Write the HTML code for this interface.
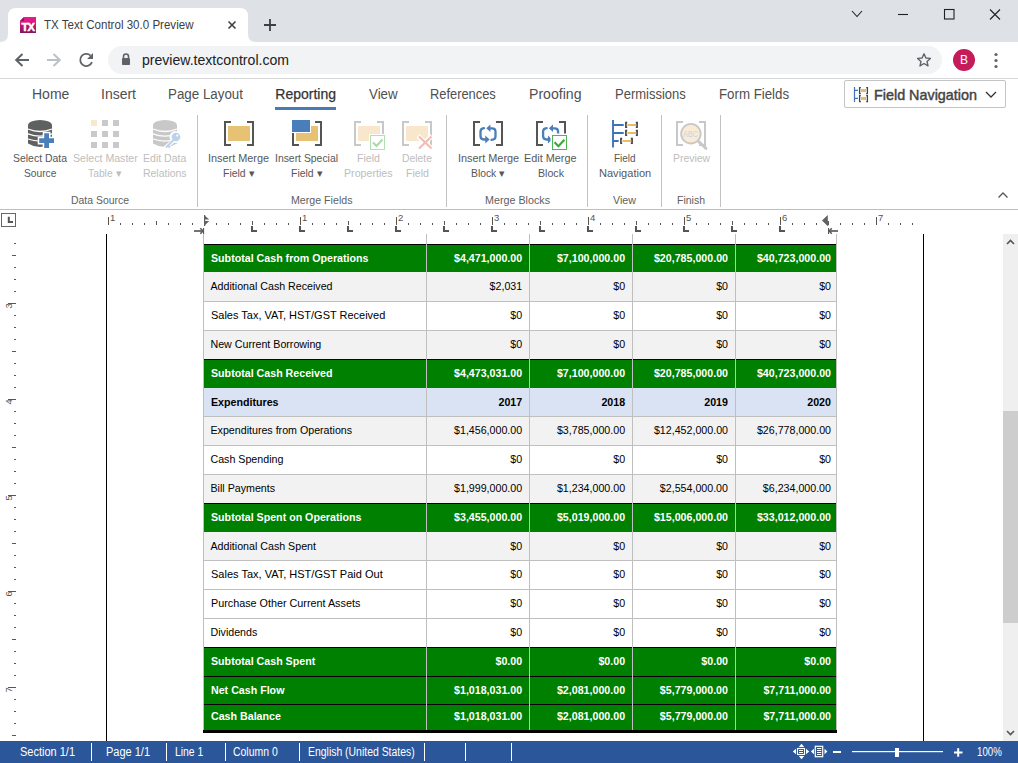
<!DOCTYPE html>
<html><head><meta charset="utf-8">
<style>
*{box-sizing:border-box;margin:0;padding:0}
html,body{width:1018px;height:763px;overflow:hidden;background:#fff;font-family:"Liberation Sans",sans-serif;position:relative}
.a{position:absolute}
.t{position:absolute;white-space:pre;line-height:0;transform-origin:0 0;font-family:"Liberation Sans",sans-serif}
svg{position:absolute;overflow:visible}
</style></head><body>
<div class="a" style="left:0px;top:0px;width:1018px;height:42px;background:#dee1e6;"></div>
<svg style="left:0;top:0" width="260" height="42" viewBox="0 0 260 42"><path d="M0,42 Q8,42 8,34 L8,16 Q8,8 16,8 L240,8 Q248,8 248,16 L248,34 Q248,42 256,42 Z" fill="#fff"/></svg>
<svg style="left:20px;top:17px" width="16" height="16" viewBox="0 0 16 16"><defs><linearGradient id="fg" x1="0" y1="0" x2="0" y2="1"><stop offset="0" stop-color="#ee1a8e"/><stop offset="0.3" stop-color="#e0167f"/><stop offset="1" stop-color="#7e1656"/></linearGradient></defs><path d="M4,0 H16 V16 H0 V4 Z" fill="url(#fg)"/><path d="M0,4 L4,0 L4,4 Z" fill="#8a1a5e"/><text x="7.8" y="13.8" text-anchor="middle" font-family="Liberation Sans" font-weight="bold" font-size="10.5" fill="#fff" letter-spacing="-0.9" stroke="#fff" stroke-width="0.5" textLength="12.4" lengthAdjust="spacingAndGlyphs">TX</text></svg>
<svg style="left:224px;top:17px" width="16" height="16" viewBox="0 0 16 16"><path d="M4.5,4.5 L11.5,11.5 M11.5,4.5 L4.5,11.5" stroke="#3c4043" stroke-width="1.6"/></svg>
<svg style="left:262px;top:17px" width="16" height="16" viewBox="0 0 16 16"><path d="M8,2 V14 M2,8 H14" stroke="#3c4043" stroke-width="1.8"/></svg>
<svg style="left:840px;top:0" width="178" height="30" viewBox="0 0 178 30"><g fill="none" stroke="#202124" stroke-width="1.1"><path d="M12,11 L17,16.5 L22,11"/><path d="M58,14.5 H68"/><rect x="104.5" y="9.5" width="9.5" height="9.5"/><path d="M150,9.5 L160,19.5 M160,9.5 L150,19.5"/></g></svg>
<div class="a" style="left:0px;top:42px;width:1018px;height:36px;background:#fff;"></div>
<div class="a" style="left:108px;top:46px;width:834px;height:28px;background:#f1f3f4;border-radius:14px;"></div>
<div class="a" style="left:0px;top:78px;width:1018px;height:1px;background:#d6d8da;"></div>
<svg style="left:14px;top:52px" width="16" height="16" viewBox="0 0 16 16"><path d="M15,8 H2.5 M8.5,2 L2.2,8 L8.5,14" fill="none" stroke="#5f6368" stroke-width="2"/></svg>
<svg style="left:46px;top:52px" width="16" height="16" viewBox="0 0 16 16"><path d="M1,8 H13.5 M7.5,2 L13.8,8 L7.5,14" fill="none" stroke="#bdc1c6" stroke-width="2"/></svg>
<svg style="left:78px;top:52px" width="16" height="16" viewBox="0 0 16 16"><path d="M14,10.2 A6.1,6.1 0 1 1 12.6,3.6" fill="none" stroke="#5f6368" stroke-width="1.8"/><path d="M15,1 V6.9 H9.1 Z" fill="#5f6368"/></svg>
<svg style="left:120px;top:52px" width="12" height="14" viewBox="0 0 12 14"><path d="M3.5,6 V4.5 A2.5,2.5 0 0 1 8.5,4.5 V6" fill="none" stroke="#5f6368" stroke-width="1.6"/><rect x="2" y="6" width="8" height="7" rx="0.8" fill="#5f6368"/></svg>
<svg style="left:916px;top:52px" width="16" height="16" viewBox="0 0 16 16"><path d="M8,1.8 L9.9,6 L14.4,6.4 L11,9.4 L12,13.9 L8,11.5 L4,13.9 L5,9.4 L1.6,6.4 L6.1,6 Z" fill="none" stroke="#5f6368" stroke-width="1.4" stroke-linejoin="round"/></svg>
<div class="a" style="left:953px;top:49px;width:22px;height:22px;background:#c51b5b;border-radius:50%;"></div>
<svg style="left:992px;top:50px" width="8" height="20" viewBox="0 0 8 20"><circle cx="4" cy="4.5" r="1.6" fill="#5f6368"/><circle cx="4" cy="10.5" r="1.6" fill="#5f6368"/><circle cx="4" cy="16.5" r="1.6" fill="#5f6368"/></svg>
<div class="a" style="left:275px;top:107px;width:61px;height:3px;background:#4a7ab5;"></div>
<div class="a" style="left:844px;top:80px;width:162px;height:28px;background:#fff;border:1px solid #c4c4c4;border-radius:2px;"></div>
<svg style="left:850px;top:84px" width="24" height="20" viewBox="0 0 24 20"><path d="M4.5,3 V18 M4.5,6.4 H8 M4.5,14.4 H8" fill="none" stroke="#3f73b3" stroke-width="1.2"/><path d="M10.8,3.6 H9.6 V9.6 H10.8 M16.2,3.6 H17.4 V9.6 H16.2 M10.8,11.6 H9.6 V17.6 H10.8 M16.2,11.6 H17.4 V17.6 H16.2" fill="none" stroke="#444" stroke-width="1.3"/><rect x="11" y="5" width="5" height="3" fill="#e8bd62"/><rect x="11" y="13" width="5" height="3" fill="#e8bd62"/></svg>
<svg style="left:984px;top:89px" width="14" height="10" viewBox="0 0 14 10"><path d="M2,3 L7,8 L12,3" fill="none" stroke="#333" stroke-width="1.3"/></svg>
<div class="a" style="left:0px;top:209px;width:1018px;height:1px;background:#bebebe;"></div>
<div class="a" style="left:197px;top:115px;width:1px;height:92px;background:#c2c2c2;"></div>
<div class="a" style="left:446px;top:115px;width:1px;height:92px;background:#c2c2c2;"></div>
<div class="a" style="left:587px;top:115px;width:1px;height:92px;background:#c2c2c2;"></div>
<div class="a" style="left:661px;top:115px;width:1px;height:92px;background:#c2c2c2;"></div>
<div class="a" style="left:720px;top:115px;width:1px;height:92px;background:#c2c2c2;"></div>
<svg style="left:996px;top:190px" width="14" height="10" viewBox="0 0 14 10"><path d="M2.5,7.5 L7,3 L11.5,7.5" fill="none" stroke="#555" stroke-width="1.3"/></svg>
<svg style="left:26px;top:118px" width="30" height="32" viewBox="0 0 30 32">
<path d="M2,7.5 A12,5.5 0 0 1 26,7.5 V25.4 Q14,32.6 2,25.4 Z" fill="#5f6060"/>
<path d="M2,11 Q14,16 26,11 M2,15.9 Q14,20.5 26,15.9 M2,21 Q14,25.2 26,21" fill="none" stroke="#fff" stroke-width="1.3"/>
<path d="M16.7,13.7 H24.5 V18.7 H29.5 V26.5 H24.5 V31.5 H16.7 V26.5 H11.7 V18.7 H16.7 Z" fill="#fff"/>
<path d="M18.2,15.2 H23 V20.2 H28 V25 H23 V30 H18.2 V25 H13.2 V20.2 H18.2 Z" fill="#4a7fba"/>
</svg>
<div class="a" style="left:91px;top:120px;width:6px;height:6px;background:#f8e8cc;"></div>
<div class="a" style="left:102px;top:120px;width:6px;height:6px;background:#c9c9c9;"></div>
<div class="a" style="left:113px;top:120px;width:6px;height:6px;background:#c9c9c9;"></div>
<div class="a" style="left:91px;top:131px;width:6px;height:6px;background:#c9c9c9;"></div>
<div class="a" style="left:102px;top:131px;width:6px;height:6px;background:#c9c9c9;"></div>
<div class="a" style="left:113px;top:131px;width:6px;height:6px;background:#c9c9c9;"></div>
<div class="a" style="left:91px;top:142px;width:6px;height:6px;background:#c9c9c9;"></div>
<div class="a" style="left:102px;top:142px;width:6px;height:6px;background:#c9c9c9;"></div>
<div class="a" style="left:113px;top:142px;width:6px;height:6px;background:#c9c9c9;"></div>
<svg style="left:151px;top:118px" width="30" height="32" viewBox="0 0 30 32">
<path d="M2,7.5 A12,5.5 0 0 1 26,7.5 V25.4 Q14,32.6 2,25.4 Z" fill="#c8c8c8"/>
<path d="M2,11 Q14,16 26,11 M2,15.9 Q14,20.5 26,15.9 M2,21 Q14,25.2 26,21" fill="none" stroke="#fff" stroke-width="1.3"/>
<circle cx="24.5" cy="19" r="6" fill="#fff"/>
<path d="M22,23 L13,31" stroke="#fff" stroke-width="4"/>
<circle cx="25" cy="19" r="4.3" fill="#bcd2ea"/>
<circle cx="26.3" cy="17.6" r="1.1" fill="#fff"/>
<path d="M22.5,22 L15,29.5 M17,27.5 L19,29.5" stroke="#bcd2ea" stroke-width="2"/>
</svg>
<svg style="left:0;top:0" width="1018" height="210" viewBox="0 0 1018 210"><path d="M231,122 H225 V145 H231 M247,122 H253 V145 H247" fill="none" stroke="#555" stroke-width="2"/><rect x="228" y="126" width="22" height="15" fill="#e8c274"/><path d="M299,122 H293 V145 H299 M315,122 H321 V145 H315" fill="none" stroke="#555" stroke-width="2"/><rect x="296" y="126" width="22" height="15" fill="#e8c274"/><rect x="291" y="119" width="20" height="14" fill="#fff"/><rect x="292" y="120" width="18" height="12" fill="#4a7ebb"/><path d="M361,122 H355 V145 H361 M377,122 H383 V145 H377" fill="none" stroke="#c8c8c8" stroke-width="2"/><rect x="358" y="126" width="22" height="15" fill="#f8e7ca"/><rect x="369" y="134" width="17" height="17" fill="#fff"/><rect x="370.5" y="135.5" width="14" height="14" fill="#fff" stroke="#b2e0b2" stroke-width="1"/><path d="M373,142.5 L376.5,146 L382.5,139.5" fill="none" stroke="#a6dba6" stroke-width="2"/><path d="M409,122 H403 V145 H409 M425,122 H431 V145 H425" fill="none" stroke="#c8c8c8" stroke-width="2"/><rect x="406" y="126" width="22" height="15" fill="#f8e7ca"/><path d="M418,136 L432,149 M432,136 L418,149" stroke="#fff" stroke-width="4.5"/><path d="M419,136.5 L431.5,148.5 M431.5,136.5 L419,148.5" stroke="#f1bcb4" stroke-width="2.2"/><path d="M480,122 H474 V145 H480 M496,122 H502 V145 H496" fill="none" stroke="#555" stroke-width="2"/><g transform="translate(0,0)"><path d="M484,128.2 Q480.5,128.5 480.5,131.5 V136 Q480.5,139.5 484,139.5 H486.5 M491.5,139.8 Q495.5,139.5 495.5,136.5 V131.5 Q495.5,128.3 492,128.3 H489.5" fill="none" stroke="#4a7fba" stroke-width="2.3" stroke-linecap="round"/><path d="M485.3,135.6 L489.6,139.5 L485.3,143.4 Z M490.4,124.5 L486.3,128.3 L490.4,132.1 Z" fill="#4a7fba"/></g><path d="M543,122 H537 V145 H543 M559,122 H565 V145 H559" fill="none" stroke="#555" stroke-width="2"/><g transform="translate(62.6,0)"><path d="M484,128.2 Q480.5,128.5 480.5,131.5 V136 Q480.5,139.5 484,139.5 H486.5 M491.5,139.8 Q495.5,139.5 495.5,136.5 V131.5 Q495.5,128.3 492,128.3 H489.5" fill="none" stroke="#4a7fba" stroke-width="2.3" stroke-linecap="round"/><path d="M485.3,135.6 L489.6,139.5 L485.3,143.4 Z M490.4,124.5 L486.3,128.3 L490.4,132.1 Z" fill="#4a7fba"/></g><rect x="550.5" y="133.5" width="18" height="18" fill="#fff"/><rect x="552.5" y="135.5" width="14" height="14" fill="#fff" stroke="#52b552" stroke-width="1"/><path d="M554.6,142.3 L558.4,146.2 L564.4,139.8" fill="none" stroke="#3aa83a" stroke-width="2.1"/><path d="M613,120 V147.6 M613,125 H623.7 M613,133 H623.7 M613,141 H618.7" fill="none" stroke="#3f73b3" stroke-width="1.9"/><g fill="none" stroke="#444" stroke-width="1.6"><path d="M627.2,122.6 H625.9 V127.2 H627.2 M635.8,122.6 H637.1 V127.2 H635.8 M627.2,130.6 H625.9 V135.2 H627.2 M635.8,130.6 H637.1 V135.2 H635.8 M622.2,138.6 H620.9 V143.2 H622.2 M630.8,138.6 H632.1 V143.2 H630.8"/></g><path d="M627.5,125 H636 M627.5,133 H636 M622.5,141 H631" stroke="#e8bd62" stroke-width="1.8"/><path d="M683,122 H677 V145 H683 M699,122 H705 V145 H699" fill="none" stroke="#c8c8c8" stroke-width="2"/><path d="M697.5,140.5 L706,148.3" stroke="#c8c8c8" stroke-width="3" stroke-linecap="round"/><circle cx="690.9" cy="133.7" r="9.8" fill="#faebd2" stroke="#c8c8c8" stroke-width="1.8"/><text x="683" y="137.2" textLength="15" lengthAdjust="spacingAndGlyphs" font-family="Liberation Sans" font-size="9.5" fill="#c3d5ea">ABC</text></svg>
<svg style="left:0;top:0" width="1018" height="763" viewBox="0 0 1018 763"><rect x="1.5" y="213.5" width="14" height="13" fill="none" stroke="#666" stroke-width="1"/><path d="M8.8,216.8 V222 H13" fill="none" stroke="#555" stroke-width="2"/><rect x="108" y="217" width="1" height="8" fill="#555"/><rect x="120" y="223" width="1" height="2" fill="#555"/><rect x="132" y="223" width="1" height="2" fill="#555"/><rect x="144" y="223" width="1" height="2" fill="#555"/><rect x="156" y="221" width="1" height="4" fill="#555"/><rect x="168" y="223" width="1" height="2" fill="#555"/><rect x="180" y="223" width="1" height="2" fill="#555"/><rect x="192" y="223" width="1" height="2" fill="#555"/><rect x="216" y="223" width="1" height="2" fill="#555"/><rect x="228" y="223" width="1" height="2" fill="#555"/><rect x="240" y="223" width="1" height="2" fill="#555"/><rect x="252" y="221" width="1" height="4" fill="#555"/><rect x="264" y="223" width="1" height="2" fill="#555"/><rect x="276" y="223" width="1" height="2" fill="#555"/><rect x="288" y="223" width="1" height="2" fill="#555"/><rect x="300" y="217" width="1" height="8" fill="#555"/><rect x="312" y="223" width="1" height="2" fill="#555"/><rect x="324" y="223" width="1" height="2" fill="#555"/><rect x="336" y="223" width="1" height="2" fill="#555"/><rect x="348" y="221" width="1" height="4" fill="#555"/><rect x="360" y="223" width="1" height="2" fill="#555"/><rect x="372" y="223" width="1" height="2" fill="#555"/><rect x="384" y="223" width="1" height="2" fill="#555"/><rect x="396" y="217" width="1" height="8" fill="#555"/><rect x="408" y="223" width="1" height="2" fill="#555"/><rect x="420" y="223" width="1" height="2" fill="#555"/><rect x="432" y="223" width="1" height="2" fill="#555"/><rect x="444" y="221" width="1" height="4" fill="#555"/><rect x="456" y="223" width="1" height="2" fill="#555"/><rect x="468" y="223" width="1" height="2" fill="#555"/><rect x="480" y="223" width="1" height="2" fill="#555"/><rect x="492" y="217" width="1" height="8" fill="#555"/><rect x="504" y="223" width="1" height="2" fill="#555"/><rect x="516" y="223" width="1" height="2" fill="#555"/><rect x="528" y="223" width="1" height="2" fill="#555"/><rect x="540" y="221" width="1" height="4" fill="#555"/><rect x="552" y="223" width="1" height="2" fill="#555"/><rect x="564" y="223" width="1" height="2" fill="#555"/><rect x="576" y="223" width="1" height="2" fill="#555"/><rect x="588" y="217" width="1" height="8" fill="#555"/><rect x="600" y="223" width="1" height="2" fill="#555"/><rect x="612" y="223" width="1" height="2" fill="#555"/><rect x="624" y="223" width="1" height="2" fill="#555"/><rect x="636" y="221" width="1" height="4" fill="#555"/><rect x="648" y="223" width="1" height="2" fill="#555"/><rect x="660" y="223" width="1" height="2" fill="#555"/><rect x="672" y="223" width="1" height="2" fill="#555"/><rect x="684" y="217" width="1" height="8" fill="#555"/><rect x="696" y="223" width="1" height="2" fill="#555"/><rect x="708" y="223" width="1" height="2" fill="#555"/><rect x="720" y="223" width="1" height="2" fill="#555"/><rect x="732" y="221" width="1" height="4" fill="#555"/><rect x="744" y="223" width="1" height="2" fill="#555"/><rect x="756" y="223" width="1" height="2" fill="#555"/><rect x="768" y="223" width="1" height="2" fill="#555"/><rect x="780" y="217" width="1" height="8" fill="#555"/><rect x="792" y="223" width="1" height="2" fill="#555"/><rect x="804" y="223" width="1" height="2" fill="#555"/><rect x="816" y="223" width="1" height="2" fill="#555"/><rect x="828" y="221" width="1" height="4" fill="#555"/><rect x="840" y="223" width="1" height="2" fill="#555"/><rect x="852" y="223" width="1" height="2" fill="#555"/><rect x="864" y="223" width="1" height="2" fill="#555"/><rect x="876" y="217" width="1" height="8" fill="#555"/><rect x="888" y="223" width="1" height="2" fill="#555"/><rect x="900" y="223" width="1" height="2" fill="#555"/><rect x="912" y="223" width="1" height="2" fill="#555"/></svg>
<svg style="left:0;top:0" width="1018" height="763" viewBox="0 0 1018 763"><path d="M252,226 V231 H257" fill="none" stroke="#555" stroke-width="2"/><path d="M300,226 V231 H305" fill="none" stroke="#555" stroke-width="2"/><path d="M348,226 V231 H353" fill="none" stroke="#555" stroke-width="2"/><path d="M396,226 V231 H401" fill="none" stroke="#555" stroke-width="2"/><path d="M444,226 V231 H449" fill="none" stroke="#555" stroke-width="2"/><path d="M492,226 V231 H497" fill="none" stroke="#555" stroke-width="2"/><path d="M540,226 V231 H545" fill="none" stroke="#555" stroke-width="2"/><path d="M588,226 V231 H593" fill="none" stroke="#555" stroke-width="2"/><path d="M636,226 V231 H641" fill="none" stroke="#555" stroke-width="2"/><path d="M684,226 V231 H689" fill="none" stroke="#555" stroke-width="2"/><path d="M732,226 V231 H737" fill="none" stroke="#555" stroke-width="2"/><path d="M780,226 V231 H785" fill="none" stroke="#555" stroke-width="2"/><path d="M204,215 L209.3,219.6 L204,219.6 Z M204,221.1 L209.3,221.1 L204,226 Z" fill="#616161"/><rect x="204" y="215" width="1.2" height="11" fill="#616161"/><path d="M194,231 H202" stroke="#5a5a5a" stroke-width="1.7"/><path d="M200.3,228.2 L203,231 L200.3,233.8" fill="none" stroke="#5a5a5a" stroke-width="1.5"/><rect x="203" y="228" width="1.1" height="6" fill="#5a5a5a"/><path d="M822,220.4 L827.8,214.9 V221.2 H829 V224.8 L827.6,226 Z" fill="#616161"/><rect x="828" y="228" width="1.1" height="6" fill="#5a5a5a"/><path d="M830,231 H838" stroke="#5a5a5a" stroke-width="1.7"/><path d="M831.8,228.2 L829.1,231 L831.8,233.8" fill="none" stroke="#5a5a5a" stroke-width="1.5"/></svg>
<svg style="left:0;top:0" width="1018" height="763" viewBox="0 0 1018 763"><rect x="14" y="243" width="2" height="1" fill="#555"/><rect x="12" y="255" width="4" height="1" fill="#555"/><rect x="14" y="267" width="2" height="1" fill="#555"/><rect x="14" y="279" width="2" height="1" fill="#555"/><rect x="14" y="291" width="2" height="1" fill="#555"/><rect x="8" y="303" width="8" height="1" fill="#555"/><rect x="14" y="315" width="2" height="1" fill="#555"/><rect x="14" y="327" width="2" height="1" fill="#555"/><rect x="14" y="339" width="2" height="1" fill="#555"/><rect x="12" y="351" width="4" height="1" fill="#555"/><rect x="14" y="363" width="2" height="1" fill="#555"/><rect x="14" y="375" width="2" height="1" fill="#555"/><rect x="14" y="387" width="2" height="1" fill="#555"/><rect x="8" y="399" width="8" height="1" fill="#555"/><rect x="14" y="411" width="2" height="1" fill="#555"/><rect x="14" y="423" width="2" height="1" fill="#555"/><rect x="14" y="435" width="2" height="1" fill="#555"/><rect x="12" y="447" width="4" height="1" fill="#555"/><rect x="14" y="459" width="2" height="1" fill="#555"/><rect x="14" y="471" width="2" height="1" fill="#555"/><rect x="14" y="483" width="2" height="1" fill="#555"/><rect x="8" y="495" width="8" height="1" fill="#555"/><rect x="14" y="507" width="2" height="1" fill="#555"/><rect x="14" y="519" width="2" height="1" fill="#555"/><rect x="14" y="531" width="2" height="1" fill="#555"/><rect x="12" y="543" width="4" height="1" fill="#555"/><rect x="14" y="555" width="2" height="1" fill="#555"/><rect x="14" y="567" width="2" height="1" fill="#555"/><rect x="14" y="579" width="2" height="1" fill="#555"/><rect x="8" y="591" width="8" height="1" fill="#555"/><rect x="14" y="603" width="2" height="1" fill="#555"/><rect x="14" y="615" width="2" height="1" fill="#555"/><rect x="14" y="627" width="2" height="1" fill="#555"/><rect x="12" y="639" width="4" height="1" fill="#555"/><rect x="14" y="651" width="2" height="1" fill="#555"/><rect x="14" y="663" width="2" height="1" fill="#555"/><rect x="14" y="675" width="2" height="1" fill="#555"/><rect x="8" y="687" width="8" height="1" fill="#555"/><rect x="14" y="699" width="2" height="1" fill="#555"/><rect x="14" y="711" width="2" height="1" fill="#555"/><rect x="14" y="723" width="2" height="1" fill="#555"/><rect x="12" y="735" width="4" height="1" fill="#555"/></svg>
<svg style="left:0;top:0" width="30" height="763" viewBox="0 0 30 763"><text transform="translate(12,308.6) rotate(-90)" font-family="Liberation Sans" font-size="9.5" fill="#555">3</text><text transform="translate(12,404.6) rotate(-90)" font-family="Liberation Sans" font-size="9.5" fill="#555">4</text><text transform="translate(12,500.6) rotate(-90)" font-family="Liberation Sans" font-size="9.5" fill="#555">5</text><text transform="translate(12,596.6) rotate(-90)" font-family="Liberation Sans" font-size="9.5" fill="#555">6</text><text transform="translate(12,692.6) rotate(-90)" font-family="Liberation Sans" font-size="9.5" fill="#555">7</text></svg>
<div class="a" style="left:106px;top:234px;width:1px;height:507px;background:#000;"></div>
<div class="a" style="left:923px;top:234px;width:1px;height:507px;background:#000;"></div>
<div class="a" style="left:203px;top:234px;width:1px;height:10px;background:#bfbfbf;"></div>
<div class="a" style="left:426px;top:234px;width:1px;height:10px;background:#bfbfbf;"></div>
<div class="a" style="left:529px;top:234px;width:1px;height:10px;background:#bfbfbf;"></div>
<div class="a" style="left:632px;top:234px;width:1px;height:10px;background:#bfbfbf;"></div>
<div class="a" style="left:735px;top:234px;width:1px;height:10px;background:#bfbfbf;"></div>
<div class="a" style="left:836px;top:234px;width:1px;height:10px;background:#bfbfbf;"></div>
<div class="a" style="left:203px;top:244px;width:634px;height:28px;background:#008000;"></div>
<div class="a" style="left:203px;top:244px;width:634px;height:1px;background:#000;"></div>
<div class="a" style="left:203px;top:272px;width:634px;height:29px;background:#f2f2f2;"></div>
<div class="a" style="left:203px;top:301px;width:634px;height:29px;background:#ffffff;"></div>
<div class="a" style="left:203px;top:301px;width:634px;height:1px;background:#bfbfbf;"></div>
<div class="a" style="left:203px;top:330px;width:634px;height:29px;background:#f2f2f2;"></div>
<div class="a" style="left:203px;top:330px;width:634px;height:1px;background:#bfbfbf;"></div>
<div class="a" style="left:203px;top:359px;width:634px;height:29px;background:#008000;"></div>
<div class="a" style="left:203px;top:359px;width:634px;height:1px;background:#000;"></div>
<div class="a" style="left:203px;top:388px;width:634px;height:28px;background:#dae3f3;"></div>
<div class="a" style="left:203px;top:416px;width:634px;height:29px;background:#f2f2f2;"></div>
<div class="a" style="left:203px;top:416px;width:634px;height:1px;background:#bfbfbf;"></div>
<div class="a" style="left:203px;top:445px;width:634px;height:29px;background:#ffffff;"></div>
<div class="a" style="left:203px;top:445px;width:634px;height:1px;background:#bfbfbf;"></div>
<div class="a" style="left:203px;top:474px;width:634px;height:29px;background:#f2f2f2;"></div>
<div class="a" style="left:203px;top:474px;width:634px;height:1px;background:#bfbfbf;"></div>
<div class="a" style="left:203px;top:503px;width:634px;height:29px;background:#008000;"></div>
<div class="a" style="left:203px;top:503px;width:634px;height:1px;background:#000;"></div>
<div class="a" style="left:203px;top:532px;width:634px;height:28px;background:#f2f2f2;"></div>
<div class="a" style="left:203px;top:560px;width:634px;height:29px;background:#ffffff;"></div>
<div class="a" style="left:203px;top:560px;width:634px;height:1px;background:#bfbfbf;"></div>
<div class="a" style="left:203px;top:589px;width:634px;height:29px;background:#ffffff;"></div>
<div class="a" style="left:203px;top:589px;width:634px;height:1px;background:#bfbfbf;"></div>
<div class="a" style="left:203px;top:618px;width:634px;height:29px;background:#ffffff;"></div>
<div class="a" style="left:203px;top:618px;width:634px;height:1px;background:#bfbfbf;"></div>
<div class="a" style="left:203px;top:647px;width:634px;height:29px;background:#008000;"></div>
<div class="a" style="left:203px;top:647px;width:634px;height:1px;background:#000;"></div>
<div class="a" style="left:203px;top:676px;width:634px;height:28px;background:#008000;"></div>
<div class="a" style="left:203px;top:676px;width:634px;height:1px;background:#000;"></div>
<div class="a" style="left:203px;top:704px;width:634px;height:26px;background:#008000;"></div>
<div class="a" style="left:203px;top:704px;width:634px;height:1px;background:#000;"></div>
<div class="a" style="left:203px;top:244px;width:1px;height:486px;background:#bfbfbf;"></div>
<div class="a" style="left:426px;top:244px;width:1px;height:486px;background:#bfbfbf;"></div>
<div class="a" style="left:529px;top:244px;width:1px;height:486px;background:#bfbfbf;"></div>
<div class="a" style="left:632px;top:244px;width:1px;height:486px;background:#bfbfbf;"></div>
<div class="a" style="left:735px;top:244px;width:1px;height:486px;background:#bfbfbf;"></div>
<div class="a" style="left:836px;top:244px;width:1px;height:486px;background:#bfbfbf;"></div>
<div class="a" style="left:203px;top:730px;width:634px;height:3px;background:#000;"></div>
<div class="a" style="left:1003px;top:234px;width:15px;height:507px;background:#efefef;"></div>
<div class="a" style="left:1003px;top:411px;width:15px;height:212px;background:#cdcdcd;"></div>
<svg style="left:1003px;top:234px" width="15" height="507" viewBox="0 0 15 507"><path d="M4,10 L7.5,6.5 L11,10" fill="none" stroke="#555" stroke-width="1.6"/><path d="M4,497 L7.5,500.5 L11,497" fill="none" stroke="#555" stroke-width="1.6"/></svg>
<div class="a" style="left:0px;top:741px;width:1018px;height:22px;background:#2b579a;"></div>
<div class="a" style="left:91px;top:743px;width:1px;height:18px;background:#fff;"></div>
<div class="a" style="left:166px;top:743px;width:1px;height:18px;background:#fff;"></div>
<div class="a" style="left:225px;top:743px;width:1px;height:18px;background:#fff;"></div>
<div class="a" style="left:299px;top:743px;width:1px;height:18px;background:#fff;"></div>
<div class="a" style="left:424px;top:743px;width:1px;height:18px;background:#fff;"></div>
<div class="a" style="left:465px;top:743px;width:1px;height:18px;background:#fff;"></div>
<div class="a" style="left:511px;top:743px;width:1px;height:18px;background:#fff;"></div>
<svg style="left:0;top:0" width="1018" height="763" viewBox="0 0 1018 763">
<rect x="797.5" y="748.5" width="7" height="6" fill="none" stroke="#fff" stroke-width="1.1"/>
<g fill="#fff">
<rect x="799" y="750" width="4" height="1"/><rect x="799" y="752" width="4" height="1"/>
<path d="M798.8,747 L801.5,743.8 L804.2,747 Z M798.8,756 L801.5,759.2 L804.2,756 Z"/>
<path d="M796,748.8 L792.8,751.5 L796,754.2 Z M806,748.8 L809.2,751.5 L806,754.2 Z"/>
<rect x="817" y="748" width="4.3" height="1"/><rect x="817" y="750" width="4.3" height="1"/><rect x="817" y="752" width="4.3" height="1"/><rect x="817" y="754" width="4.3" height="1"/>
<path d="M814,748.8 L810.9,751.5 L814,754.2 Z M824.5,748.8 L827.4,751.5 L824.5,754.2 Z"/>
<rect x="833" y="751" width="8" height="2"/>
<rect x="852" y="751" width="91" height="1.2"/>
<rect x="895" y="748" width="4" height="9"/>
<rect x="954" y="751.5" width="8.5" height="2"/><rect x="957.2" y="748.2" width="2" height="8.5"/>
</g>
<rect x="815.3" y="746.3" width="7.4" height="10.4" fill="none" stroke="#fff" stroke-width="1.2"/>
</svg>
<div class="t" style="left:44.00px;top:24.84px;font-size:12px;color:#3c4043;transform:scaleX(0.9634);">TX Text Control 30.0 Preview</div>
<div class="t" style="left:142.00px;top:60.15px;font-size:14px;color:#202124;transform:scaleX(1.0048);">preview.textcontrol.com</div>
<div class="t" style="left:959.99px;top:60.34px;font-size:12px;color:#fff;">B</div>
<div class="t" style="left:32.00px;top:93.85px;font-size:14px;color:#4f4f4f;">Home</div>
<div class="t" style="left:101.00px;top:93.85px;font-size:14px;color:#4f4f4f;">Insert</div>
<div class="t" style="left:168.00px;top:93.85px;font-size:14px;color:#4f4f4f;transform:scaleX(0.9539);">Page Layout</div>
<div class="t" style="left:275.30px;top:93.85px;font-size:14px;color:#333;-webkit-text-stroke:0.25px #333;">Reporting</div>
<div class="t" style="left:368.50px;top:93.85px;font-size:14px;color:#4f4f4f;transform:scaleX(0.9504);">View</div>
<div class="t" style="left:430.20px;top:93.85px;font-size:14px;color:#4f4f4f;transform:scaleX(0.9191);">References</div>
<div class="t" style="left:529.00px;top:93.85px;font-size:14px;color:#4f4f4f;transform:scaleX(1.0066);">Proofing</div>
<div class="t" style="left:614.70px;top:93.85px;font-size:14px;color:#4f4f4f;transform:scaleX(0.9285);">Permissions</div>
<div class="t" style="left:718.50px;top:93.85px;font-size:14px;color:#4f4f4f;transform:scaleX(0.9485);">Form Fields</div>
<div class="t" style="left:874.00px;top:94.88px;font-size:14.5px;color:#444;transform:scaleX(0.9905);-webkit-text-stroke:0.45px #444;">Field Navigation</div>
<div class="t" style="left:13.30px;top:158.36px;font-size:10.5px;color:#575757;transform:scaleX(0.9948);">Select Data</div>
<div class="t" style="left:24.10px;top:173.16px;font-size:10.5px;color:#575757;transform:scaleX(0.9735);">Source</div>
<div class="t" style="left:72.70px;top:158.36px;font-size:10.5px;color:#bdbdbd;transform:scaleX(1.0093);">Select Master</div>
<div class="t" style="left:88.40px;top:173.16px;font-size:10.5px;color:#bdbdbd;transform:scaleX(0.9815);">Table ▾</div>
<div class="t" style="left:143.10px;top:158.36px;font-size:10.5px;color:#bdbdbd;">Edit Data</div>
<div class="t" style="left:142.90px;top:173.16px;font-size:10.5px;color:#bdbdbd;transform:scaleX(0.9959);">Relations</div>
<div class="t" style="left:208.35px;top:158.36px;font-size:10.5px;color:#575757;transform:scaleX(1.0364);">Insert Merge</div>
<div class="t" style="left:223.15px;top:173.16px;font-size:10.5px;color:#575757;transform:scaleX(0.9941);">Field ▾</div>
<div class="t" style="left:275.00px;top:158.36px;font-size:10.5px;color:#575757;transform:scaleX(0.9902);">Insert Special</div>
<div class="t" style="left:290.75px;top:173.16px;font-size:10.5px;color:#575757;transform:scaleX(0.9941);">Field ▾</div>
<div class="t" style="left:357.20px;top:158.36px;font-size:10.5px;color:#bdbdbd;transform:scaleX(1.0103);">Field</div>
<div class="t" style="left:344.45px;top:173.16px;font-size:10.5px;color:#bdbdbd;transform:scaleX(1.0134);">Properties</div>
<div class="t" style="left:402.00px;top:158.36px;font-size:10.5px;color:#bdbdbd;transform:scaleX(0.9882);">Delete</div>
<div class="t" style="left:405.50px;top:173.16px;font-size:10.5px;color:#bdbdbd;transform:scaleX(1.0103);">Field</div>
<div class="t" style="left:457.80px;top:158.36px;font-size:10.5px;color:#575757;transform:scaleX(1.0381);">Insert Merge</div>
<div class="t" style="left:471.40px;top:173.16px;font-size:10.5px;color:#575757;transform:scaleX(0.9828);">Block ▾</div>
<div class="t" style="left:524.45px;top:158.36px;font-size:10.5px;color:#575757;transform:scaleX(1.0338);">Edit Merge</div>
<div class="t" style="left:537.70px;top:173.16px;font-size:10.5px;color:#575757;transform:scaleX(1.0122);">Block</div>
<div class="t" style="left:613.85px;top:158.36px;font-size:10.5px;color:#575757;transform:scaleX(0.9444);">Field</div>
<div class="t" style="left:598.50px;top:173.16px;font-size:10.5px;color:#575757;transform:scaleX(1.0519);">Navigation</div>
<div class="t" style="left:672.65px;top:158.36px;font-size:10.5px;color:#bdbdbd;transform:scaleX(0.9931);">Preview</div>
<div class="t" style="left:71.00px;top:200.36px;font-size:10.5px;color:#606060;transform:scaleX(0.9936);">Data Source</div>
<div class="t" style="left:291.45px;top:200.36px;font-size:10.5px;color:#606060;transform:scaleX(1.0131);">Merge Fields</div>
<div class="t" style="left:485.00px;top:200.36px;font-size:10.5px;color:#606060;transform:scaleX(1.0219);">Merge Blocks</div>
<div class="t" style="left:613.00px;top:200.36px;font-size:10.5px;color:#606060;transform:scaleX(1.0187);">View</div>
<div class="t" style="left:677.00px;top:200.36px;font-size:10.5px;color:#606060;">Finish</div>
<div class="t" style="left:110.00px;top:217.71px;font-size:9.5px;color:#555;">1</div>
<div class="t" style="left:302.00px;top:217.71px;font-size:9.5px;color:#555;">1</div>
<div class="t" style="left:398.00px;top:217.71px;font-size:9.5px;color:#555;">2</div>
<div class="t" style="left:494.00px;top:217.71px;font-size:9.5px;color:#555;">3</div>
<div class="t" style="left:590.00px;top:217.71px;font-size:9.5px;color:#555;">4</div>
<div class="t" style="left:686.00px;top:217.71px;font-size:9.5px;color:#555;">5</div>
<div class="t" style="left:782.00px;top:217.71px;font-size:9.5px;color:#555;">6</div>
<div class="t" style="left:878.00px;top:217.71px;font-size:9.5px;color:#555;">7</div>
<div class="t" style="left:211.00px;top:258.30px;font-size:10.67px;color:#fff;font-weight:bold;">Subtotal Cash from Operations</div>
<div class="t" style="left:454.04px;top:258.30px;font-size:10.67px;color:#fff;font-weight:bold;">$4,471,000.00</div>
<div class="t" style="left:556.94px;top:258.30px;font-size:10.67px;color:#fff;font-weight:bold;">$7,100,000.00</div>
<div class="t" style="left:653.92px;top:258.30px;font-size:10.67px;color:#fff;font-weight:bold;">$20,785,000.00</div>
<div class="t" style="left:756.92px;top:258.30px;font-size:10.67px;color:#fff;font-weight:bold;">$40,723,000.00</div>
<div class="t" style="left:210.50px;top:286.30px;font-size:10.67px;color:#000;">Additional Cash Received</div>
<div class="t" style="left:489.61px;top:286.30px;font-size:10.67px;color:#000;">$2,031</div>
<div class="t" style="left:613.24px;top:286.30px;font-size:10.67px;color:#000;">$0</div>
<div class="t" style="left:716.14px;top:286.30px;font-size:10.67px;color:#000;">$0</div>
<div class="t" style="left:819.14px;top:286.30px;font-size:10.67px;color:#000;">$0</div>
<div class="t" style="left:210.50px;top:315.30px;font-size:10.67px;color:#000;transform:scaleX(1.0302);">Sales Tax, VAT, HST/GST Received</div>
<div class="t" style="left:510.34px;top:315.30px;font-size:10.67px;color:#000;">$0</div>
<div class="t" style="left:613.24px;top:315.30px;font-size:10.67px;color:#000;">$0</div>
<div class="t" style="left:716.14px;top:315.30px;font-size:10.67px;color:#000;">$0</div>
<div class="t" style="left:819.14px;top:315.30px;font-size:10.67px;color:#000;">$0</div>
<div class="t" style="left:210.50px;top:344.30px;font-size:10.67px;color:#000;">New Current Borrowing</div>
<div class="t" style="left:510.34px;top:344.30px;font-size:10.67px;color:#000;">$0</div>
<div class="t" style="left:613.24px;top:344.30px;font-size:10.67px;color:#000;">$0</div>
<div class="t" style="left:716.14px;top:344.30px;font-size:10.67px;color:#000;">$0</div>
<div class="t" style="left:819.14px;top:344.30px;font-size:10.67px;color:#000;">$0</div>
<div class="t" style="left:211.00px;top:373.30px;font-size:10.67px;color:#fff;font-weight:bold;">Subtotal Cash Received</div>
<div class="t" style="left:454.04px;top:373.30px;font-size:10.67px;color:#fff;font-weight:bold;">$4,473,031.00</div>
<div class="t" style="left:556.94px;top:373.30px;font-size:10.67px;color:#fff;font-weight:bold;">$7,100,000.00</div>
<div class="t" style="left:653.92px;top:373.30px;font-size:10.67px;color:#fff;font-weight:bold;">$20,785,000.00</div>
<div class="t" style="left:756.92px;top:373.30px;font-size:10.67px;color:#fff;font-weight:bold;">$40,723,000.00</div>
<div class="t" style="left:211.00px;top:402.30px;font-size:10.67px;color:#000;font-weight:bold;">Expenditures</div>
<div class="t" style="left:498.48px;top:402.30px;font-size:10.67px;color:#000;font-weight:bold;">2017</div>
<div class="t" style="left:601.38px;top:402.30px;font-size:10.67px;color:#000;font-weight:bold;">2018</div>
<div class="t" style="left:704.28px;top:402.30px;font-size:10.67px;color:#000;font-weight:bold;">2019</div>
<div class="t" style="left:807.28px;top:402.30px;font-size:10.67px;color:#000;font-weight:bold;">2020</div>
<div class="t" style="left:210.50px;top:430.30px;font-size:10.67px;color:#000;">Expenditures from Operations</div>
<div class="t" style="left:454.04px;top:430.30px;font-size:10.67px;color:#000;">$1,456,000.00</div>
<div class="t" style="left:556.94px;top:430.30px;font-size:10.67px;color:#000;">$3,785,000.00</div>
<div class="t" style="left:653.92px;top:430.30px;font-size:10.67px;color:#000;">$12,452,000.00</div>
<div class="t" style="left:756.92px;top:430.30px;font-size:10.67px;color:#000;">$26,778,000.00</div>
<div class="t" style="left:210.50px;top:459.30px;font-size:10.67px;color:#000;">Cash Spending</div>
<div class="t" style="left:510.34px;top:459.30px;font-size:10.67px;color:#000;">$0</div>
<div class="t" style="left:613.24px;top:459.30px;font-size:10.67px;color:#000;">$0</div>
<div class="t" style="left:716.14px;top:459.30px;font-size:10.67px;color:#000;">$0</div>
<div class="t" style="left:819.14px;top:459.30px;font-size:10.67px;color:#000;">$0</div>
<div class="t" style="left:210.50px;top:488.30px;font-size:10.67px;color:#000;">Bill Payments</div>
<div class="t" style="left:454.04px;top:488.30px;font-size:10.67px;color:#000;">$1,999,000.00</div>
<div class="t" style="left:556.94px;top:488.30px;font-size:10.67px;color:#000;">$1,234,000.00</div>
<div class="t" style="left:659.84px;top:488.30px;font-size:10.67px;color:#000;">$2,554,000.00</div>
<div class="t" style="left:762.84px;top:488.30px;font-size:10.67px;color:#000;">$6,234,000.00</div>
<div class="t" style="left:211.00px;top:517.30px;font-size:10.67px;color:#fff;font-weight:bold;">Subtotal Spent on Operations</div>
<div class="t" style="left:454.04px;top:517.30px;font-size:10.67px;color:#fff;font-weight:bold;">$3,455,000.00</div>
<div class="t" style="left:556.94px;top:517.30px;font-size:10.67px;color:#fff;font-weight:bold;">$5,019,000.00</div>
<div class="t" style="left:653.92px;top:517.30px;font-size:10.67px;color:#fff;font-weight:bold;">$15,006,000.00</div>
<div class="t" style="left:756.92px;top:517.30px;font-size:10.67px;color:#fff;font-weight:bold;">$33,012,000.00</div>
<div class="t" style="left:210.50px;top:546.30px;font-size:10.67px;color:#000;">Additional Cash Spent</div>
<div class="t" style="left:510.34px;top:546.30px;font-size:10.67px;color:#000;">$0</div>
<div class="t" style="left:613.24px;top:546.30px;font-size:10.67px;color:#000;">$0</div>
<div class="t" style="left:716.14px;top:546.30px;font-size:10.67px;color:#000;">$0</div>
<div class="t" style="left:819.14px;top:546.30px;font-size:10.67px;color:#000;">$0</div>
<div class="t" style="left:210.50px;top:574.30px;font-size:10.67px;color:#000;transform:scaleX(1.0330);">Sales Tax, VAT, HST/GST Paid Out</div>
<div class="t" style="left:510.34px;top:574.30px;font-size:10.67px;color:#000;">$0</div>
<div class="t" style="left:613.24px;top:574.30px;font-size:10.67px;color:#000;">$0</div>
<div class="t" style="left:716.14px;top:574.30px;font-size:10.67px;color:#000;">$0</div>
<div class="t" style="left:819.14px;top:574.30px;font-size:10.67px;color:#000;">$0</div>
<div class="t" style="left:210.50px;top:603.30px;font-size:10.67px;color:#000;transform:scaleX(1.0123);">Purchase Other Current Assets</div>
<div class="t" style="left:510.34px;top:603.30px;font-size:10.67px;color:#000;">$0</div>
<div class="t" style="left:613.24px;top:603.30px;font-size:10.67px;color:#000;">$0</div>
<div class="t" style="left:716.14px;top:603.30px;font-size:10.67px;color:#000;">$0</div>
<div class="t" style="left:819.14px;top:603.30px;font-size:10.67px;color:#000;">$0</div>
<div class="t" style="left:210.50px;top:632.30px;font-size:10.67px;color:#000;">Dividends</div>
<div class="t" style="left:510.34px;top:632.30px;font-size:10.67px;color:#000;">$0</div>
<div class="t" style="left:613.24px;top:632.30px;font-size:10.67px;color:#000;">$0</div>
<div class="t" style="left:716.14px;top:632.30px;font-size:10.67px;color:#000;">$0</div>
<div class="t" style="left:819.14px;top:632.30px;font-size:10.67px;color:#000;">$0</div>
<div class="t" style="left:211.00px;top:661.30px;font-size:10.67px;color:#fff;font-weight:bold;">Subtotal Cash Spent</div>
<div class="t" style="left:495.53px;top:661.30px;font-size:10.67px;color:#fff;font-weight:bold;">$0.00</div>
<div class="t" style="left:598.43px;top:661.30px;font-size:10.67px;color:#fff;font-weight:bold;">$0.00</div>
<div class="t" style="left:701.33px;top:661.30px;font-size:10.67px;color:#fff;font-weight:bold;">$0.00</div>
<div class="t" style="left:804.33px;top:661.30px;font-size:10.67px;color:#fff;font-weight:bold;">$0.00</div>
<div class="t" style="left:211.00px;top:690.30px;font-size:10.67px;color:#fff;font-weight:bold;">Net Cash Flow</div>
<div class="t" style="left:454.04px;top:690.30px;font-size:10.67px;color:#fff;font-weight:bold;">$1,018,031.00</div>
<div class="t" style="left:556.94px;top:690.30px;font-size:10.67px;color:#fff;font-weight:bold;">$2,081,000.00</div>
<div class="t" style="left:659.84px;top:690.30px;font-size:10.67px;color:#fff;font-weight:bold;">$5,779,000.00</div>
<div class="t" style="left:763.44px;top:690.30px;font-size:10.67px;color:#fff;font-weight:bold;">$7,711,000.00</div>
<div class="t" style="left:211.00px;top:716.30px;font-size:10.67px;color:#fff;font-weight:bold;">Cash Balance</div>
<div class="t" style="left:454.04px;top:716.30px;font-size:10.67px;color:#fff;font-weight:bold;">$1,018,031.00</div>
<div class="t" style="left:556.94px;top:716.30px;font-size:10.67px;color:#fff;font-weight:bold;">$2,081,000.00</div>
<div class="t" style="left:659.84px;top:716.30px;font-size:10.67px;color:#fff;font-weight:bold;">$5,779,000.00</div>
<div class="t" style="left:763.44px;top:716.30px;font-size:10.67px;color:#fff;font-weight:bold;">$7,711,000.00</div>
<div class="t" style="left:20.40px;top:752.04px;font-size:12px;color:#fff;transform:scaleX(0.9160);">Section 1/1</div>
<div class="t" style="left:106.30px;top:752.04px;font-size:12px;color:#fff;transform:scaleX(0.9158);">Page 1/1</div>
<div class="t" style="left:175.00px;top:752.04px;font-size:12px;color:#fff;transform:scaleX(0.8654);">Line 1</div>
<div class="t" style="left:233.30px;top:752.04px;font-size:12px;color:#fff;transform:scaleX(0.8703);">Column 0</div>
<div class="t" style="left:308.40px;top:752.04px;font-size:12px;color:#fff;transform:scaleX(0.8694);">English (United States)</div>
<div class="t" style="left:976.70px;top:752.04px;font-size:12px;color:#fff;transform:scaleX(0.8077);">100%</div>
</body></html>
